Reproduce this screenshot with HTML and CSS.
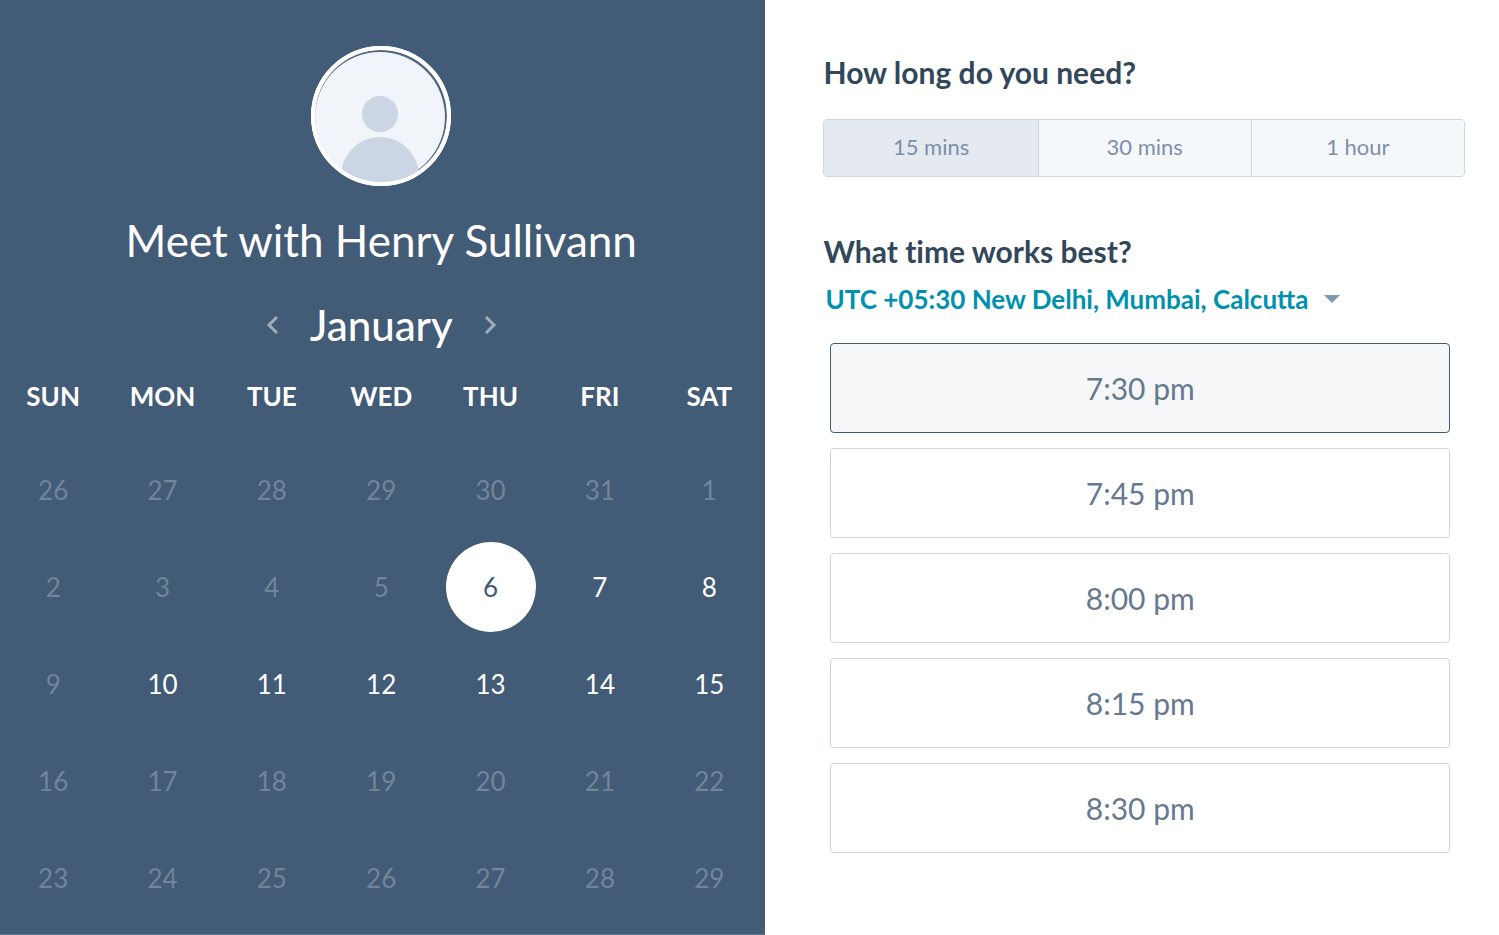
FILE: index.html
```
<!DOCTYPE html>
<html lang="en">
<head>
  <meta charset="UTF-8">
  <meta name="viewport" content="width=device-width, initial-scale=1">
  <title>Meet with Henry Sullivann</title>
  <link rel="stylesheet" href="styles.css">
</head>
<body>

  <main class="scheduler">
    <section class="calendar-panel">
      <svg class="avatar" viewBox="0 0 140 140" role="img" aria-label="Henry Sullivann">
        <clipPath id="avatarClip"><circle cx="70" cy="70" r="66"/></clipPath>
        <circle cx="70" cy="70" r="70" fill="#fff"/>
        <circle cx="70" cy="70" r="66" fill="#506680"/>
        <circle cx="69" cy="71" r="65" fill="#f1f4f8"/>
        <g fill="#ccd5e3" clip-path="url(#avatarClip)">
          <circle cx="69" cy="68" r="18"/>
          <circle cx="69" cy="130" r="39"/>
        </g>
        <circle cx="70" cy="70" r="68" fill="none" stroke="#fff" stroke-width="4"/>
      </svg>

      <h1>Meet with Henry Sullivann</h1>

      <div class="month-nav">
        <button class="month-arrow" aria-label="Previous month">
          <svg viewBox="0 0 14 20"><path d="M11 2 L3 10 L11 18"/></svg>
        </button>
        <h2>January</h2>
        <button class="month-arrow" aria-label="Next month">
          <svg viewBox="0 0 14 20"><path d="M3 2 L11 10 L3 18"/></svg>
        </button>
      </div>

      <table class="calendar">
        <thead>
          <tr><th>SUN</th><th>MON</th><th>TUE</th><th>WED</th><th>THU</th><th>FRI</th><th>SAT</th></tr>
        </thead>
        <tbody id="calendarDays"></tbody>
      </table>
    </section>

    <section class="time-panel">
      <h3>How long do you need?</h3>
      <div class="durations">
        <button class="selected">15 mins</button>
        <button>30 mins</button>
        <button>1 hour</button>
      </div>

      <h3>What time works best?</h3>
      <div class="timezone">
        <select id="timezone" aria-label="Time zone">
          <option>UTC +05:30 New Delhi, Mumbai, Calcutta</option>
        </select>
        <svg class="caret" viewBox="0 0 16 8"><path d="M0 0 H16 L8 8 Z"/></svg>
      </div>

      <div class="times">
        <button class="selected">7:30 pm</button>
        <button>7:45 pm</button>
        <button>8:00 pm</button>
        <button>8:15 pm</button>
        <button>8:30 pm</button>
      </div>
    </section>
  </main>

  <script>
    const weeks = [
      [26, 27, 28, 29, 30, 31, 1],
      [2, 3, 4, 5, 6, 7, 8],
      [9, 10, 11, 12, 13, 14, 15],
      [16, 17, 18, 19, 20, 21, 22],
      [23, 24, 25, 26, 27, 28, 29]
    ];
    const available = [6, 7, 8, 10, 11, 12, 13, 14, 15];

    const calendarDays = document.getElementById('calendarDays');

    weeks.forEach(week => {
      const row = document.createElement('tr');
      week.forEach(day => {
        const cell = document.createElement('td');
        const button = document.createElement('button');
        button.className = 'day';
        button.textContent = day;
        button.disabled = !available.includes(day);
        if (day === 6) button.classList.add('selected');
        cell.appendChild(button);
        row.appendChild(cell);
      });
      calendarDays.appendChild(row);
    });

    // only one button can be picked in each group
    function pickOne(selector) {
      const buttons = document.querySelectorAll(selector);
      buttons.forEach(button => {
        button.addEventListener('click', () => {
          buttons.forEach(other => other.classList.remove('selected'));
          button.classList.add('selected');
        });
      });
    }

    pickOne('.day');
    pickOne('.durations button');
    pickOne('.times button');
  </script>

</body>
</html>
```
FILE: styles.css
```
* {
  box-sizing: border-box;
}

body {
  margin: 0;
  font-family: Lato, "Open Sans", sans-serif;
  background-color: #fff;
  color: #33475b;
}

h1, h2, h3 {
  margin: 0;
}

button, select {
  font-family: inherit;
  cursor: pointer;
}

.scheduler {
  display: grid;
  grid-template-columns: calc(51% + 1px) 1fr;
  min-height: 100vh;
}

.calendar-panel {
  display: flex;
  flex-direction: column;
  align-items: center;
  padding: 46px 3px 8px 0;
  background-color: #425b76;
  border-bottom: 1px solid #5f7690;
  color: #fff;
}

.avatar {
  width: 140px;
  height: 140px;
}

h1 {
  margin-top: 26px;
  font-size: 44px;
  line-height: 56px;
  font-weight: 400;
}

.month-nav {
  display: flex;
  align-items: center;
  gap: 30px;
  margin-top: 33px;
}

h2 {
  font-size: 42px;
  line-height: 48px;
  font-weight: 500;
}

.month-arrow {
  display: flex;
  padding: 0;
  border: none;
  background: none;
}

.month-arrow svg {
  width: 14px;
  height: 20px;
  fill: none;
  stroke: #a0adba;
  stroke-width: 3;
}

.calendar {
  width: calc(100% + 3px);
  margin-top: 24px;
  border-collapse: collapse;
  table-layout: fixed;
}

.calendar th {
  height: 46px;
  padding: 0;
  font-size: 26px;
  font-weight: 700;
}

.calendar thead::after {
  content: "";
  display: block;
  height: 22px;
}

.calendar td {
  height: 97px;
  padding: 0;
  text-align: center;
}

.day {
  width: 90px;
  height: 90px;
  padding: 0;
  border: none;
  border-radius: 50%;
  background: none;
  color: #fff;
  font-size: 26px;
}

.day:disabled {
  color: #71859b;
  cursor: default;
}

.day.selected {
  background-color: #fff;
  color: #425b76;
}

.time-panel {
  padding: 54px 34px 54px 58px;
}

h3 {
  font-size: 30px;
  line-height: 36px;
  font-weight: 700;
  font-variant-ligatures: none;
}

.durations {
  display: grid;
  grid-template-columns: repeat(3, 1fr);
  height: 58px;
  margin: 29px 0 56px;
  border: 1px solid #cbd6e2;
  border-radius: 4px;
  overflow: hidden;
}

.durations button {
  padding: 0 0 4px;
  border: none;
  background-color: #f5f8fa;
  color: #7c90a9;
  font-size: 22px;
}

.durations button + button {
  border-left: 1px solid #cbd6e2;
}

.durations .selected {
  background-color: #e5eaf1;
}

.timezone {
  display: flex;
  align-items: center;
  gap: 15px;
  margin: 12px 0 26px 2px;
}

.timezone select {
  appearance: none;
  padding: 0;
  border: none;
  background: none;
  color: #0091ae;
  font-size: 26px;
  line-height: 36px;
  font-weight: 700;
}

.caret {
  width: 16px;
  height: 8px;
  fill: #7c98b6;
}

.times {
  display: grid;
  gap: 15px;
  margin: 0 15px 0 7px;
}

.times button {
  height: 90px;
  border: 1px solid #cbd6e2;
  border-radius: 4px;
  background-color: #fff;
  color: #66798e;
  font-size: 30px;
}

.times .selected {
  border-color: #425b76;
  background-color: #f5f7f9;
}
```
